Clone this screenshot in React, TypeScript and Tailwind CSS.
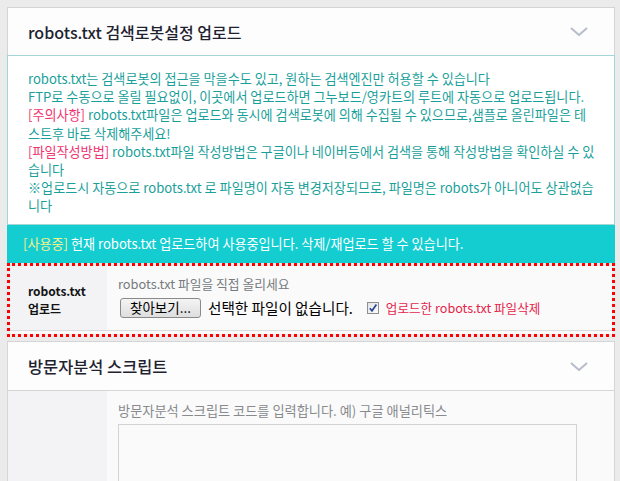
import React from "react";

function Chevron() {
  return (
    <svg width="18" height="9" viewBox="0 0 18 9" fill="none" aria-hidden="true">
      <path d="M1 1 L9 8 L17 1" stroke="#b8bccb" strokeWidth="2" strokeLinejoin="miter" />
    </svg>
  );
}

function CheckBox() {
  return (
    <span className="flex h-[12px] w-[12px] items-center justify-center border border-[#8e8f8f] bg-gradient-to-br from-[#e4e4e4] to-[#fbfbfb]">
      <svg width="10" height="10" viewBox="0 0 10 10" fill="none" aria-hidden="true">
        <path d="M1.8 5.2 L4 7.8 L8.4 1.6" stroke="#2b4596" strokeWidth="1.7" />
      </svg>
    </span>
  );
}

const Pink = ({ children }: { children: React.ReactNode }) => (
  <span className="text-[#f0336f]">{children}</span>
);

export default function App() {
  return (
    <div className="min-h-screen bg-[#ebebeb] pl-[7px] pr-[5px] pt-[7px] font-['Noto_Sans_CJK_KR',sans-serif]">
      {/* Card 1 */}
      <section>
        <div className="flex h-[48px] items-center justify-between border border-b-0 border-[#d4d4d4] bg-[#fdfdfd] pl-[20px] pr-[26px]">
          <h2 className="text-[16px] font-medium leading-none text-[#1f2330]">
            robots.txt 검색로봇설정 업로드
          </h2>
          <Chevron />
        </div>
        <div className="h-[170px] whitespace-nowrap border border-[#a3d7d3] bg-white pl-[20px] pt-[14px] text-[13.1px] leading-[18.2px] text-[#1a9f9b]">
          <div>robots.txt는 검색로봇의 접근을 막을수도 있고, 원하는 검색엔진만 허용할 수 있습니다</div>
          <div>FTP로 수동으로 올릴 필요없이, 이곳에서 업로드하면 그누보드/영카트의 루트에 자동으로 업로드됩니다.</div>
          <div>
            <Pink>[주의사항]</Pink> robots.txt파일은 업로드와 동시에 검색로봇에 의해 수집될 수 있으므로,샘플로 올린파일은 테
          </div>
          <div>스트후 바로 삭제해주세요!</div>
          <div>
            <Pink>[파일작성방법]</Pink> robots.txt파일 작성방법은 구글이나 네이버등에서 검색을 통해 작성방법을 확인하실 수 있
          </div>
          <div>습니다</div>
          <div>※업로드시 자동으로 robots.txt 로 파일명이 자동 변경저장되므로, 파일명은 robots가 아니어도 상관없습</div>
          <div>니다</div>
        </div>
        <div className="flex h-[38px] items-center whitespace-nowrap bg-[#13cdd1] pl-[16px] text-[13.1px] text-white">
          <span className="text-[#f5ef8c]">[사용중]</span>&nbsp;현재 robots.txt 업로드하여 사용중입니다. 삭제/재업로드 할 수 있습니다.
        </div>
        <div className="border-[3px] border-dotted border-[#ff0000]">
          <div className="flex h-[65px] border-b border-[#dcdcdc]">
            <div className="w-[97px] bg-[#f3f3f6] pl-[18px] pt-[16px] text-[12px] font-bold leading-[18px] text-[#141414]">
              <div>robots.txt</div>
              <div>업로드</div>
            </div>
            <div className="flex-1 whitespace-nowrap bg-[#fafafa] pl-[11px] pt-[9px]">
              <div className="text-[12.8px] leading-[18px] text-[#767a80]">robots.txt 파일을 직접 올리세요</div>
              <div className="mt-[5px] flex items-center">
                <button className="ml-[2px] flex h-[20px] w-[81px] items-center justify-center rounded-[3px] border border-[#8a8a8a] bg-gradient-to-b from-[#f4f4f4] to-[#dedede] text-[13.5px] leading-none text-black">
                  찾아보기...
                </button>
                <span className="ml-[7px] text-[14.6px] leading-none text-black">선택한 파일이 없습니다.</span>
                <span className="ml-[14px]">
                  <CheckBox />
                </span>
                <span className="ml-[7px] text-[12.6px] leading-none text-[#e61f4c]">업로드한 robots.txt 파일삭제</span>
              </div>
            </div>
          </div>
          <div className="h-[3px] bg-[#fafafa]" />
        </div>
      </section>

      {/* Card 2 */}
      <section className="mt-[4px] border border-b-0 border-[#d6d6d6]">
        <div className="flex h-[49px] items-center justify-between border-b border-[#d6d6d6] bg-[#fdfdfd] pl-[20px] pr-[26px]">
          <h2 className="text-[16.4px] font-medium leading-none text-[#1f2330]">방문자분석 스크립트</h2>
          <Chevron />
        </div>
        <div className="flex">
          <div className="w-[99px] bg-[#f3f3f6]" />
          <div className="flex-1 bg-[#fafafa] pb-[20px] pl-[11px] pt-[11px]">
            <div className="whitespace-nowrap text-[13.2px] leading-[18px] text-[#888a8e]">
              방문자분석 스크립트 코드를 입력합니다. 예) 구글 애널리틱스
            </div>
            <textarea className="mt-[4px] block h-[120px] w-[459px] resize-none border border-[#d3d3d3] bg-[#fafafa] outline-none" />
          </div>
        </div>
      </section>
    </div>
  );
}
